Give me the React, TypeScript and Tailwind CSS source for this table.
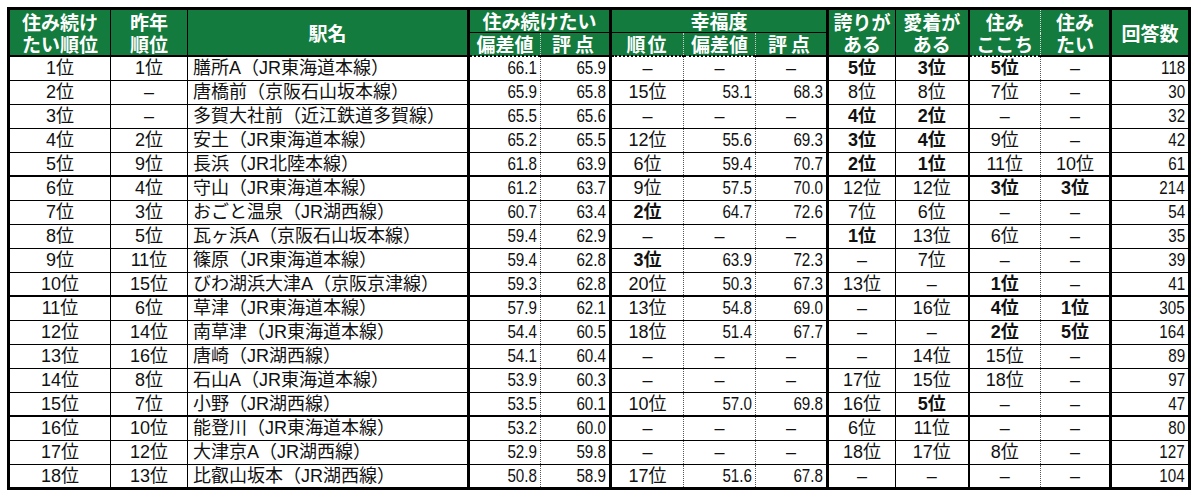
const rows: string[][] = [
  ['1位', '1位', '膳所A（JR東海道本線）', '66.1', '65.9', '–', '–', '–', '5位', '3位', '5位', '–', '118'],
  ['2位', '–', '唐橋前（京阪石山坂本線）', '65.9', '65.8', '15位', '53.1', '68.3', '8位', '8位', '7位', '–', '30'],
  ['3位', '–', '多賀大社前（近江鉄道多賀線）', '65.5', '65.6', '–', '–', '–', '4位', '2位', '–', '–', '32'],
  ['4位', '2位', '安土（JR東海道本線）', '65.2', '65.5', '12位', '55.6', '69.3', '3位', '4位', '9位', '–', '42'],
  ['5位', '9位', '長浜（JR北陸本線）', '61.8', '63.9', '6位', '59.4', '70.7', '2位', '1位', '11位', '10位', '61'],
  ['6位', '4位', '守山（JR東海道本線）', '61.2', '63.7', '9位', '57.5', '70.0', '12位', '12位', '3位', '3位', '214'],
  ['7位', '3位', 'おごと温泉（JR湖西線）', '60.7', '63.4', '2位', '64.7', '72.6', '7位', '6位', '–', '–', '54'],
  ['8位', '5位', '瓦ヶ浜A（京阪石山坂本線）', '59.4', '62.9', '–', '–', '–', '1位', '13位', '6位', '–', '35'],
  ['9位', '11位', '篠原（JR東海道本線）', '59.4', '62.8', '3位', '63.9', '72.3', '–', '7位', '–', '–', '39'],
  ['10位', '15位', 'びわ湖浜大津A（京阪京津線）', '59.3', '62.8', '20位', '50.3', '67.3', '13位', '–', '1位', '–', '41'],
  ['11位', '6位', '草津（JR東海道本線）', '57.9', '62.1', '13位', '54.8', '69.0', '–', '16位', '4位', '1位', '305'],
  ['12位', '14位', '南草津（JR東海道本線）', '54.4', '60.5', '18位', '51.4', '67.7', '–', '–', '2位', '5位', '164'],
  ['13位', '16位', '唐崎（JR湖西線）', '54.1', '60.4', '–', '–', '–', '–', '14位', '15位', '–', '89'],
  ['14位', '8位', '石山A（JR東海道本線）', '53.9', '60.3', '–', '–', '–', '17位', '15位', '18位', '–', '97'],
  ['15位', '7位', '小野（JR湖西線）', '53.5', '60.1', '10位', '57.0', '69.8', '16位', '5位', '–', '–', '47'],
  ['16位', '10位', '能登川（JR東海道本線）', '53.2', '60.0', '–', '–', '–', '6位', '11位', '–', '–', '80'],
  ['17位', '12位', '大津京A（JR湖西線）', '52.9', '59.8', '–', '–', '–', '18位', '17位', '8位', '–', '127'],
  ['18位', '13位', '比叡山坂本（JR湖西線）', '50.8', '58.9', '17位', '51.6', '67.8', '–', '–', '–', '–', '104'],
];

// right border of each column
const borderCls = [
  'border-r border-r-black',
  'border-r border-r-black',
  'border-r-[3px] border-r-black',
  'border-r border-dotted border-r-[#555]',
  'border-r-[3px] border-r-black',
  'border-r border-dotted border-r-[#555]',
  'border-r border-dotted border-r-[#555]',
  'border-r-[3px] border-r-black',
  'border-r border-r-black',
  'border-r-2 border-r-black',
  'border-r border-dotted border-r-[#555]',
  'border-r-[3px] border-r-black',
  '',
];

// numeric columns (right aligned, condensed digits)
const numCols = [3, 4, 6, 7, 12];
// rank columns where top 5 are shown bold
const boldCols = [5, 8, 9, 10, 11];

const widths = [102, 77, 281, 72, 70, 73, 72, 72, 68, 73, 72, 70, 79];

const isTop5 = (v: string) => {
  const n = parseInt(v, 10);
  return !isNaN(n) && n <= 5;
};

const Cell = ({ v, ci }: { v: string; ci: number }) => {
  const bold = boldCols.includes(ci) && isTop5(v) ? 'font-bold' : '';
  if (ci === 2) {
    return <td className={`${borderCls[ci]} p-0 pl-[5px] text-left`}>{v}</td>;
  }
  if (v === '–') {
    return <td className={`${borderCls[ci]} p-0 text-center`}>–</td>;
  }
  if (numCols.includes(ci)) {
    return (
      <td className={`${borderCls[ci]} p-0 pr-[3px] text-right`}>
        <span className="inline-block origin-right scale-x-[0.8] text-[19px]">{v}</span>
      </td>
    );
  }
  return <td className={`${borderCls[ci]} p-0 text-center ${bold}`}>{v}</td>;
};

const th = 'bg-[#137b3d] text-white font-bold text-[19px] leading-[22px] text-center border-black p-0';

export default function App() {
  return (
    <div className="bg-white w-[1200px] h-[492px] pl-[7px] pt-[7px]">
      <table
        className="table-fixed border-collapse border-[3px] border-black w-[1183px]"
        style={{ fontFamily: '"Liberation Sans", "Noto Sans CJK JP", sans-serif' }}
      >
        <colgroup>
          {widths.map((w, i) => (
            <col key={i} style={{ width: w }} />
          ))}
        </colgroup>
        <thead style={{ fontFamily: '"Noto Sans CJK JP", sans-serif' }}>
          <tr className="h-[23px]">
            <th rowSpan={2} className={`${th} border-r border-b-2`}>
              住み続け<br />たい順位
            </th>
            <th rowSpan={2} className={`${th} border-r border-b-2`}>
              昨年<br />順位
            </th>
            <th rowSpan={2} className={`${th} border-r-[3px] border-b-2`}>
              駅名
            </th>
            <th colSpan={2} className={`${th} border-r-[3px] border-b`}>
              住み続けたい
            </th>
            <th colSpan={3} className={`${th} border-r-[3px] border-b`}>
              幸福度
            </th>
            <th rowSpan={2} className={`${th} border-r border-b-2`}>
              誇りが<br />ある
            </th>
            <th rowSpan={2} className={`${th} border-r-2 border-b-2`}>
              愛着が<br />ある
            </th>
            <th rowSpan={2} className={`${th} border-r border-dotted border-r-[#ddd] border-b-2 border-b-black`}>
              住み<br />ここち
            </th>
            <th rowSpan={2} className={`${th} border-r-[3px] border-b-2`}>
              住み<br />たい
            </th>
            <th rowSpan={2} className={`${th} border-b-2`}>
              回答数
            </th>
          </tr>
          <tr className="h-[22px]">
            <th className={`${th} border-r border-dotted border-r-[#ccc] border-b-2 border-b-black`}>偏差値</th>
            <th className={`${th} border-r-[3px] border-b-2 tracking-[4px]`}>評点</th>
            <th className={`${th} border-r border-dotted border-r-[#ccc] border-b-2 border-b-black tracking-[2px]`}>順位</th>
            <th className={`${th} border-r border-dotted border-r-[#ccc] border-b-2 border-b-black`}>偏差値</th>
            <th className={`${th} border-r-[3px] border-b-2 tracking-[4px]`}>評点</th>
          </tr>
        </thead>
        <tbody className="text-[18px] leading-[22px] text-[#111] whitespace-nowrap">
          {rows.map((r, ri) => (
            <tr
              key={ri}
              className={`h-[24px] ${ri % 5 === 4 ? 'border-b-2' : 'border-b'} border-black`}
            >
              {r.map((v, ci) => (
                <Cell key={ci} v={v} ci={ci} />
              ))}
            </tr>
          ))}
        </tbody>
      </table>
    </div>
  );
}
